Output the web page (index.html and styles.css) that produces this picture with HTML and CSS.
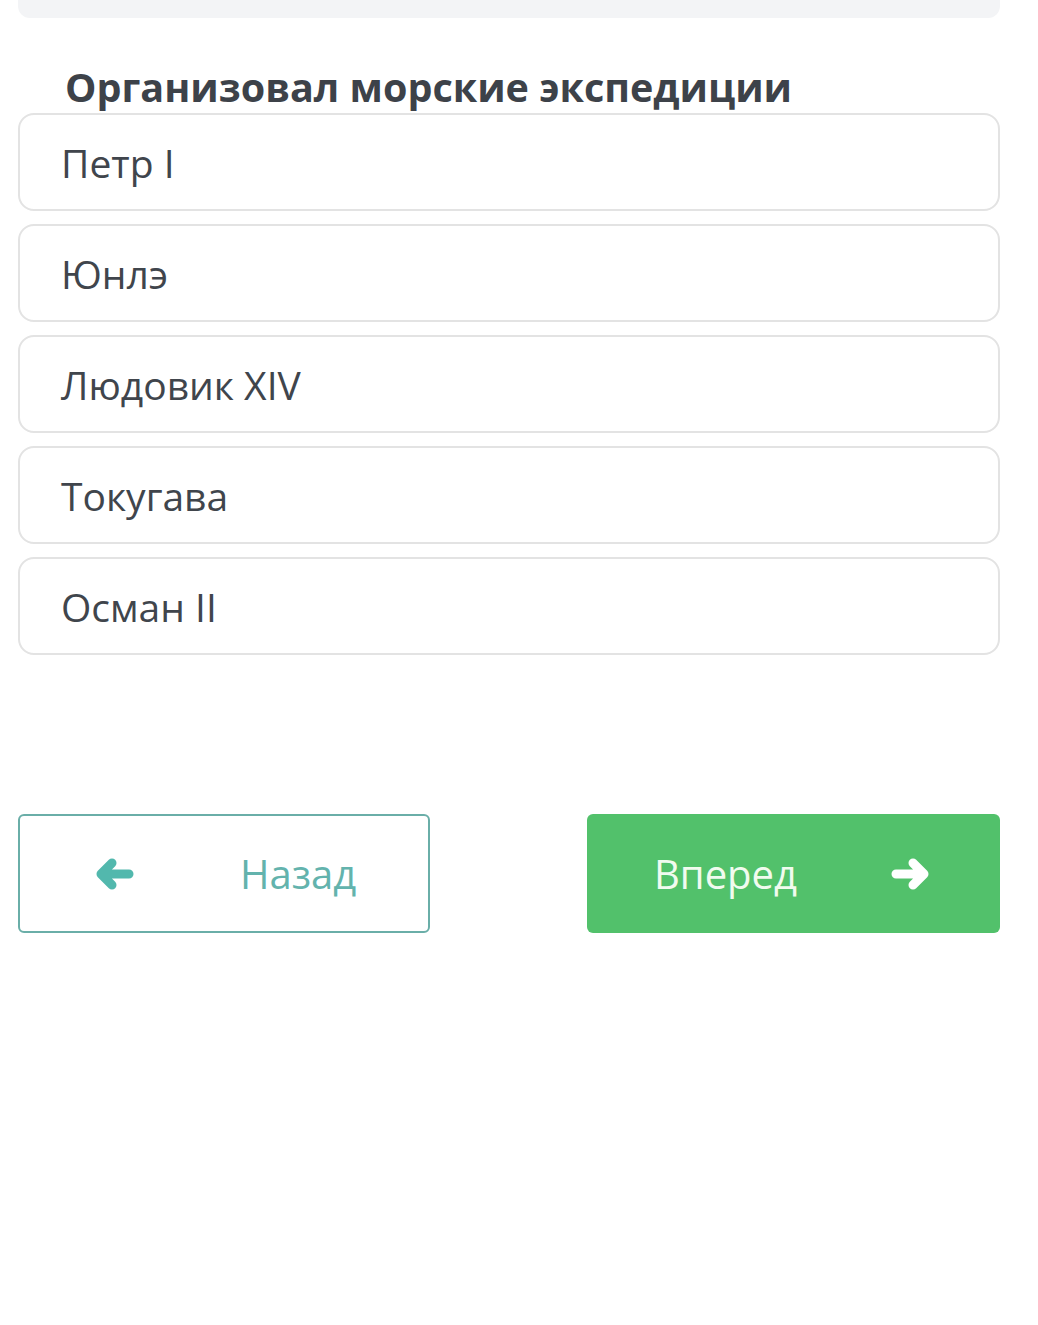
FILE: index.html
```html
<!DOCTYPE html>
<html lang="ru">
<head>
<meta charset="utf-8">
<link rel="stylesheet" href="styles.css">
</head>
<body>
<div class="page">
  <div class="top-box"></div>
  <h2 class="question">Организовал морские экспедиции</h2>
  <div class="options">
    <div class="option">Петр I</div>
    <div class="option">Юнлэ</div>
    <div class="option">Людовик XIV</div>
    <div class="option">Токугава</div>
    <div class="option">Осман II</div>
  </div>
  <div class="nav">
    <button class="btn btn-back">
      <svg class="icon" viewBox="0 0 40 34" width="40" height="34"><path d="M35 17H7M18 6L7 17l11 11" fill="none" stroke="#52b8ad" stroke-width="9" stroke-linecap="round" stroke-linejoin="round"/></svg>
      <span>Назад</span>
    </button>
    <button class="btn btn-next">
      <span>Вперед</span>
      <svg class="icon" viewBox="0 0 40 34" width="40" height="34"><path d="M5 17h28M22 6l11 11-11 11" fill="none" stroke="#ffffff" stroke-width="9" stroke-linecap="round" stroke-linejoin="round"/></svg>
    </button>
  </div>
</div>
</body>
</html>
```
FILE: styles.css
```css
html, body {
  margin: 0;
  padding: 0;
  background: #ffffff;
}
body {
  font-family: "Open Sans", "Noto Sans", sans-serif;
  color: #3e434a;
}
.page {
  padding: 0 38px 0 18px;
  display: flex;
  flex-direction: column;
}
.top-box {
  height: 18px;
  background: #f3f4f6;
  border-radius: 0 0 12px 12px;
}
.question {
  margin: 43px 0 0 47px;
  font-size: 39.5px;
  font-weight: 700;
  line-height: 52px;
  color: #3d4249;
  letter-spacing: 0;
}
.options {
  display: flex;
  flex-direction: column;
  gap: 13px;
}
.option {
  height: 94px;
  border: 2px solid #e3e3e3;
  border-radius: 16px;
  box-sizing: content-box;
  padding: 0 0 0 41px;
  display: flex;
  align-items: center;
  font-size: 39px;
  color: #40454c;
  line-height: 1;
}
.nav {
  margin-top: 159px;
  display: flex;
  justify-content: space-between;
}
.btn {
  width: 412px;
  height: 119px;
  border-radius: 6px;
  display: flex;
  align-items: center;
  font-family: "Open Sans", "Noto Sans", sans-serif;
  font-size: 40px;
  box-sizing: border-box;
  padding: 0;
}
.btn-back {
  background: #ffffff;
  border: 2px solid #6aaea8;
  color: #63b3ad;
  padding-left: 74px;
  gap: 106px;
}
.btn-next {
  width: 413px;
  background: #52c16b;
  border: none;
  color: #f1fbef;
  padding-left: 67px;
  gap: 94px;
}
.icon {
  display: block;
}
```
